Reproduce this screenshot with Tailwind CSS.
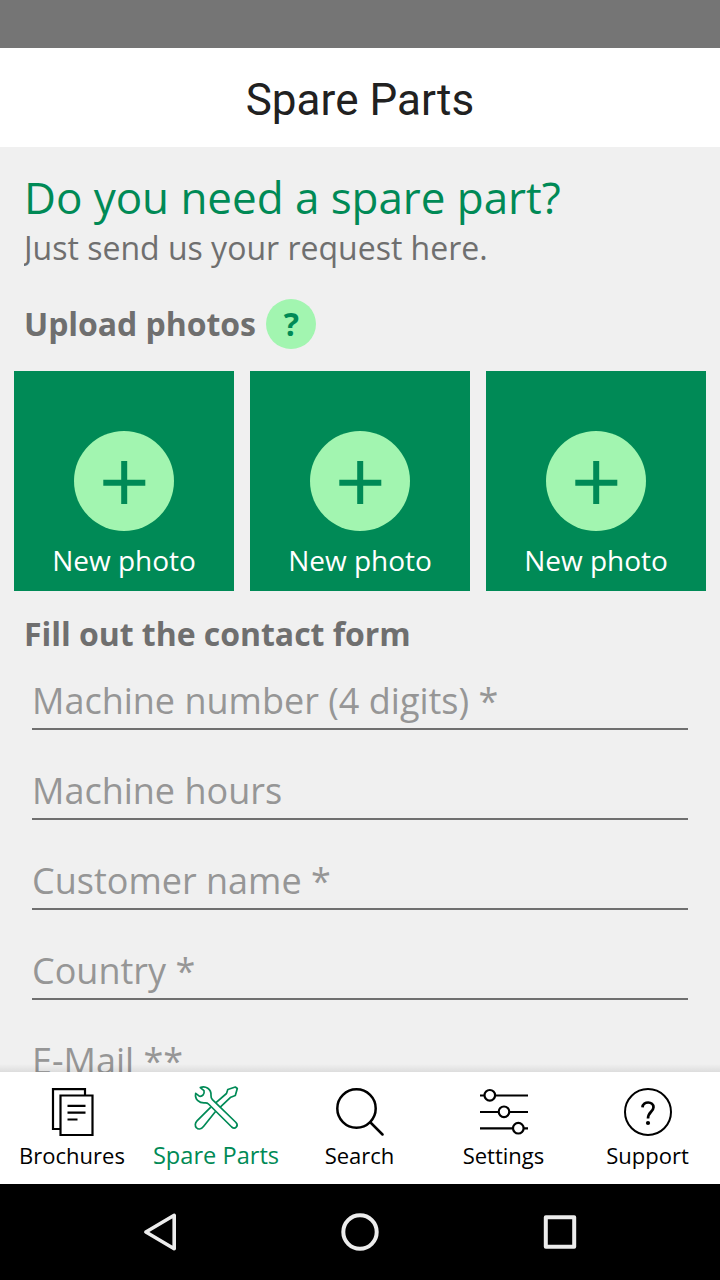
<!DOCTYPE html>
<html lang="en">
<head>
<meta charset="utf-8">
<title>Spare Parts</title>
<script src="https://cdn.jsdelivr.net/npm/@tailwindcss/browser@4"></script>
</head>
<body class="w-[720px] h-[1280px] overflow-hidden flex flex-col bg-[#f0f0f0] font-['Open_Sans',sans-serif] text-[#6f6f6f]">
<div class="h-12 shrink-0 bg-[#757575]"></div>
<header class="h-[99px] shrink-0 bg-white flex items-center justify-center pt-1">
  <h1 class="font-['Roboto',sans-serif] text-[44px] leading-[52px] tracking-[0.05px] text-[#212121] whitespace-nowrap">Spare Parts</h1>
</header>
<main class="flex-1 min-h-0 overflow-hidden pt-[21px]">
  <h2 class="pl-6 text-[44px] leading-[58px] tracking-[-0.05px] text-[#008a56] whitespace-nowrap">Do you need a spare part?</h2>
  <p class="ml-6 overflow-hidden text-[32px] leading-[44px]">Just send us your request here.</p>
  <div class="mt-[29px] pl-6 flex items-center h-[50px] gap-[10px]">
    <h3 class="text-[32px] leading-[44px] tracking-[-0.06px] font-bold">Upload photos</h3>
    <span class="size-[50px] rounded-full bg-[#a2f5b0] text-[#008a56] text-[32px] leading-[49px] font-bold text-center pl-px">?</span>
  </div>
  <div class="mt-[22px] px-[14px] grid grid-cols-3 gap-4">
    <div class="h-[220px] bg-[#008a56] flex flex-col items-center pt-[60px]">
      <svg class="size-[100px]" viewBox="0 0 100 100"><circle cx="50" cy="50" r="50" fill="#a2f5b0"/><path d="M29.300 51.800H71.300M50.200 30V73" stroke="#008a56" stroke-width="6"/></svg>
      <span class="mt-[10px] text-[28px] leading-[38px] text-white">New photo</span>
    </div>
    <div class="h-[220px] bg-[#008a56] flex flex-col items-center pt-[60px]">
      <svg class="size-[100px]" viewBox="0 0 100 100"><circle cx="50" cy="50" r="50" fill="#a2f5b0"/><path d="M29.300 51.800H71.300M50.200 30V73" stroke="#008a56" stroke-width="6"/></svg>
      <span class="mt-[10px] text-[28px] leading-[38px] text-white">New photo</span>
    </div>
    <div class="h-[220px] bg-[#008a56] flex flex-col items-center pt-[60px]">
      <svg class="size-[100px]" viewBox="0 0 100 100"><circle cx="50" cy="50" r="50" fill="#a2f5b0"/><path d="M29.300 51.800H71.300M50.200 30V73" stroke="#008a56" stroke-width="6"/></svg>
      <span class="mt-[10px] text-[28px] leading-[38px] text-white">New photo</span>
    </div>
  </div>
  <h3 class="mt-[21px] pl-6 text-[32px] leading-[44px] tracking-[-0.04px] font-bold">Fill out the contact form</h3>
  <div class="px-8 flex flex-col gap-4 text-[36px] leading-[50px] text-[#969696]">
    <div class="h-[74px] pt-5 border-b-2 border-[#6f6f6f]">Machine number (4 digits) *</div>
    <div class="h-[74px] pt-5 border-b-2 border-[#6f6f6f]">Machine hours</div>
    <div class="h-[74px] pt-5 border-b-2 border-[#6f6f6f]">Customer name *</div>
    <div class="h-[74px] pt-5 border-b-2 border-[#6f6f6f]">Country *</div>
    <div class="h-[74px] pt-5 border-b-2 border-[#6f6f6f]">E-Mail **</div>
  </div>
</main>
<div class="h-2 -mt-2 shrink-0 relative bg-linear-to-b from-black/0 to-black/8"></div>
<nav class="h-28 shrink-0 bg-white grid grid-cols-5 text-[22px] leading-[30px] text-black">
  <div class="flex flex-col items-center pt-4">
    <svg class="size-12" viewBox="0 0 48 48" fill="none" stroke="currentColor" stroke-width="2.200"><path d="M12 41H5V1.200H37V7"/><path d="M12.500 7.500H44.500V47H12.500Z"/><path d="M19.500 17.800H37.500M19.500 24.600H37.500M19.500 31.500H29.500"/></svg>
    <span class="mt-1">Brochures</span>
  </div>
  <div class="flex flex-col items-center pt-[12px] text-[#008a56]">
    <svg class="size-12" viewBox="0 0 48 48" fill="none" stroke="currentColor" stroke-width="1.700" stroke-linejoin="round"><path d="M23.500 27.500L11.500 42.500C9 45.700 6 45.500 4.500 43.800C2.700 42 3 38.800 5 36.800L18.800 23.200M23.700 18.800L34.500 9.500L35.800 5.500L43.300 3L45.300 4.500L43.300 11.500L38.800 13.200L28 23.300"/><path d="M8.300 3.600C13.500 1.500 19.500 5 19 11.500C18.900 13.500 19.300 14.500 20.400 15.600L44 38.500C47 42 43 45.800 39.700 43L16.500 20C15.500 19 14.500 18.700 13 18.800C7.500 19.300 2.500 15.500 3.700 9.300L7.300 12.200C10.500 12.800 12.800 10 12 6.700Z"/></svg>
    <span class="mt-[7px] text-[23.600px] leading-[32px]">Spare Parts</span>
  </div>
  <div class="flex flex-col items-center pt-4">
    <svg class="size-12" viewBox="0 0 48 48" fill="none" stroke="currentColor" stroke-width="2.500" stroke-linecap="round"><circle cx="20.500" cy="20.500" r="19.200"/><path d="M34.500 34.500L46.500 46.500"/></svg>
    <span class="mt-1 mr-px">Search</span>
  </div>
  <div class="flex flex-col items-center pt-4">
    <svg class="size-12" viewBox="0 0 48 48" fill="none" stroke="currentColor" stroke-width="2.200"><path d="M0 7.500H4.500M15 7.500H48M0 24H18.500M29.500 24H48M0 40.300H33M43.500 40.300H48"/><circle cx="9.800" cy="7.300" r="5.300"/><circle cx="24" cy="23.800" r="5.300"/><circle cx="38.300" cy="40.200" r="5.300"/></svg>
    <span class="mt-1 mr-px">Settings</span>
  </div>
  <div class="flex flex-col items-center pt-4">
    <svg class="size-12" viewBox="0 0 48 48" fill="none" stroke="currentColor" stroke-width="2"><circle cx="24" cy="24" r="23"/><path d="M18.500 19.300C19 12.800 29.700 13 29.500 19.200C29.300 24 24 23.800 24 30.500" stroke-width="2.700"/><circle cx="24" cy="35" r="2.100" fill="currentColor" stroke="none"/></svg>
    <span class="mt-1 mr-px">Support</span>
  </div>
</nav>
<footer class="h-24 shrink-0 bg-black flex items-center justify-center gap-[152px]">
  <svg class="size-12" viewBox="0 0 48 48" fill="none" stroke="#ececec" stroke-width="3.600" stroke-linejoin="round"><path d="M38.200 7.300V40.700L9.900 24Z"/></svg>
  <svg class="size-12" viewBox="0 0 48 48" fill="none" stroke="#ececec" stroke-width="4"><circle cx="24" cy="24" r="16.700"/></svg>
  <svg class="size-12" viewBox="0 0 48 48" fill="none" stroke="#ececec" stroke-width="4" stroke-linejoin="round"><path d="M9.800 9.300H38.200V38.700H9.800Z"/></svg>
</footer>
</body>
</html>
